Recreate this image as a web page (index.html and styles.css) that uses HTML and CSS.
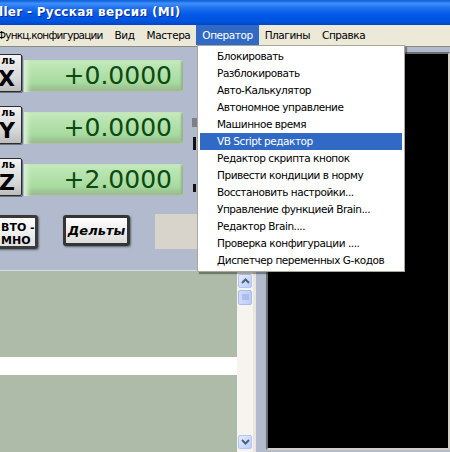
FILE: index.html
```html
<!DOCTYPE html>
<html lang="ru">
<head>
    <meta charset="UTF-8">
    <meta name="viewport" content="width=device-width, initial-scale=1.0">
    <title>Mach3 - Русская версия</title>
    <link rel="stylesheet" href="styles.css">
</head>
<body>
    <div class="window">
        <div class="titlebar">
            <span class="title">ller - Русская версия (MI)</span>
        </div>

        <div class="menubar">
            <span class="menu-item first">Функц.конфигурации</span>
            <span class="menu-item">Вид</span>
            <span class="menu-item">Мастера</span>
            <span class="menu-item active">Оператор</span>
            <span class="menu-item">Плагины</span>
            <span class="menu-item">Справка</span>
        </div>

        <div class="workspace">
            <div class="left-col">
                <div class="dro-block">
                    <div class="dro-rows">
                        <div class="dro-row">
                            <div class="zero-btn"><span class="zero-label">ль</span><span class="zero-axis">X</span></div>
                            <div class="dro">+0.0000</div>
                        </div>
                        <div class="dro-row">
                            <div class="zero-btn"><span class="zero-label">ль</span><span class="zero-axis">Y</span></div>
                            <div class="dro">+0.0000</div>
                        </div>
                        <div class="dro-row">
                            <div class="zero-btn"><span class="zero-label">ль</span><span class="zero-axis">Z</span></div>
                            <div class="dro">+2.0000</div>
                        </div>
                    </div>
                    <!-- slider peeking out from under the menu -->
                    <div class="jog-strip">
                        <div class="jog-box"></div>
                        <div class="jog-bar"></div>
                        <div class="jog-mark"></div>
                    </div>
                </div>

                <div class="btn-row">
                    <div class="auto-btn">ВТО -<br>МНО</div>
                    <div class="delta-btn">Дельты</div>
                    <div class="blank-box"></div>
                </div>

                <div class="list-area">
                    <div class="list">
                        <div class="list-row"></div>
                    </div>
                    <div class="scrollbar">
                        <div class="sb-btn">
                            <svg width="9" height="6" viewBox="0 0 9 6"><path d="M1 5 L4.5 1.5 L8 5" fill="none" stroke="#4d6185" stroke-width="2"/></svg>
                        </div>
                        <div class="sb-thumb">
                            <svg width="7" height="7" viewBox="0 0 7 7"><path d="M0 1H7M0 3H7M0 5H7" stroke="#8ea6e0" stroke-width="1"/></svg>
                        </div>
                        <div class="sb-btn sb-down">
                            <svg width="9" height="6" viewBox="0 0 9 6"><path d="M1 1 L4.5 4.5 L8 1" fill="none" stroke="#4d6185" stroke-width="2"/></svg>
                        </div>
                    </div>
                    <div class="list-edge"></div>
                </div>
            </div>

            <div class="toolpath"></div>
        </div>

        <ul class="dropdown">
            <li>Блокировать</li>
            <li>Разблокировать</li>
            <li>Авто-Калькулятор</li>
            <li>Автономное управление</li>
            <li>Машинное время</li>
            <li class="selected">VB Script редактор</li>
            <li>Редактор скрипта кнопок</li>
            <li>Привести кондиции в норму</li>
            <li>Восстановить настройки...</li>
            <li>Управление функцией Brain...</li>
            <li>Редактор Brain....</li>
            <li>Проверка конфигурации ....</li>
            <li>Диспетчер переменных G-кодов</li>
        </ul>
    </div>
</body>
</html>
```

FILE: styles.css
```css
* {
    box-sizing: border-box;
}

html, body {
    margin: 0;
    width: 450px;
    height: 452px;
    overflow: hidden;
}

body {
    background: #b1bbcd;
    font-family: 'DejaVu Sans', 'Liberation Sans', sans-serif;
}

.window {
    position: relative;
    height: 452px;
    display: flex;
    flex-direction: column;
}

.titlebar {
    height: 25px;
    flex-shrink: 0;
    background: linear-gradient(to bottom, #0a5bd8 0%, #3d8ff8 14%, #1f70ef 32%, #0058e6 60%, #0054de 85%, #0046c6 100%);
    color: #fff;
    font: bold 12px 'DejaVu Sans', sans-serif;
    line-height: 25px;
    white-space: nowrap;
}

.title {
    margin-left: -1px;
    letter-spacing: 0.3px;
    text-shadow: 1px 1px 0 #0b2a9a;
}

.menubar {
    display: flex;
    height: 22px;
    flex-shrink: 0;
    background: #ece9d8;
    border-bottom: 1px solid #8d8b80;
    font-size: 10.5px;
    letter-spacing: -0.45px;
    color: #000;
    white-space: nowrap;
}

.menu-item {
    padding: 0 6px;
    height: 20px;
    line-height: 20px;
}

.menu-item.first {
    margin-left: -9px;
    letter-spacing: -0.8px;
}

.menu-item.active {
    background: #316ac5;
    color: #fff;
}

.workspace {
    display: flex;
    flex: 1;
    min-height: 0;
}

.left-col {
    width: 262px;
    flex-shrink: 0;
    padding-top: 7px;
    display: flex;
    flex-direction: column;
}

.dro-block {
    display: flex;
}

.dro-row {
    display: flex;
    align-items: flex-start;
    height: 38px;
    margin-bottom: 14px;
}

.zero-btn {
    width: 42px;
    height: 38px;
    margin-left: -20px;
    padding-right: 6px;
    display: flex;
    flex-direction: column;
    align-items: flex-end;
    background: linear-gradient(to bottom, #f4f4f4, #d4d4d4 70%, #bcbcbc);
    border: 1px solid #2c2c2c;
    border-radius: 2px;
    box-shadow: 1px 1px 0 #6c7280;
    color: #000;
    font-weight: bold;
}

.zero-label {
    font-size: 10px;
    line-height: 12px;
}

.zero-axis {
    font-size: 22px;
    line-height: 24px;
}

.dro {
    width: 159px;
    height: 32px;
    margin: 6px 0 0 2px;
    padding-right: 11px;
    text-align: right;
    font-size: 25px;
    line-height: 32px;
    color: #0b4a10;
    background: linear-gradient(to bottom, #c3e9bb 0%, #a8db9f 70%, #9cc492 88%, #8a9783 100%);
    box-shadow: inset 4px 0 4px #d6f0d0, inset -2px 0 2px #93b48c;
}

.jog-strip {
    width: 6px;
    margin-left: 8px;
    display: flex;
    flex-direction: column;
    align-items: center;
}

.jog-box {
    width: 5px;
    height: 9px;
    margin-top: 64px;
    background: #7c7f88;
}

.jog-bar {
    width: 3px;
    height: 13px;
    margin-top: 10px;
    background: #111;
}

.jog-mark {
    width: 3px;
    height: 8px;
    margin-top: 34px;
    background: #111;
}

.btn-row {
    display: flex;
    align-items: flex-start;
    height: 55px;
    flex-shrink: 0;
    margin-top: 5px;
}

.auto-btn {
    width: 44px;
    height: 34px;
    margin-left: -6px;
    padding: 3px 0 0 4px;
    font-size: 11px;
    font-weight: bold;
    line-height: 13px;
    white-space: nowrap;
    background: linear-gradient(to bottom, #ffffff, #e0e0e0);
    border: 3px solid #3a3a3a;
    border-radius: 3px;
    box-shadow: 1px 1px 2px #5c6270;
}

.delta-btn {
    width: 67px;
    height: 31px;
    margin-left: 25px;
    font-size: 13px;
    font-weight: bold;
    font-style: italic;
    line-height: 25px;
    text-align: center;
    background: linear-gradient(to bottom, #ffffff, #dcdcdc);
    border: 3px solid #353535;
    border-radius: 3px;
    box-shadow: 1px 1px 2px #5c6270;
}

.blank-box {
    width: 60px;
    height: 35px;
    margin: -1px 0 0 25px;
    background: #d8d4cc;
}

.list-area {
    flex: 1;
    min-height: 0;
    display: flex;
    border-top: 1px solid #d6dbe4;
}

.list {
    width: 237px;
    background: #adbba8;
    padding-top: 86px;
}

.list-row {
    height: 18px;
    background: #fff;
}

.scrollbar {
    width: 16px;
    display: flex;
    flex-direction: column;
    align-items: center;
    background: #f5f4ee;
    padding: 3px 0;
}

.sb-btn {
    width: 14px;
    height: 14px;
    flex-shrink: 0;
    display: flex;
    align-items: center;
    justify-content: center;
    background: linear-gradient(to bottom right, #e3ebfe, #bccdf8);
    border: 1px solid #b4c6ef;
    border-radius: 2px;
}

.sb-down {
    margin-top: auto;
}

.sb-thumb {
    width: 14px;
    height: 15px;
    flex-shrink: 0;
    margin-top: 2px;
    display: flex;
    align-items: center;
    justify-content: center;
    background: linear-gradient(to right, #d0dcfc, #bccdf8);
    border: 1px solid #a8bcec;
    border-radius: 2px;
}

.list-edge {
    width: 3px;
    background: #e8e6de;
}

.toolpath {
    flex: 1;
    margin: 5px 0 2px 4px;
    background: #000;
    border-top: 2px solid #6e6e6e;
    border-left: 2px solid #6e6e6e;
    border-bottom: 2px solid #d4d0c8;
    border-right: 2px solid #d4d0c8;
}

.dropdown {
    position: absolute;
    top: 45px;
    left: 197px;
    width: 208px;
    margin: 0;
    padding: 2px;
    list-style: none;
    background: #fff;
    border: 1px solid #aca899;
    box-shadow: 2px 2px 1px rgba(0, 0, 0, 0.35);
    font-size: 10.5px;
    letter-spacing: -0.45px;
    color: #000;
}

.dropdown li {
    height: 17px;
    line-height: 17px;
    padding-left: 17px;
    white-space: nowrap;
}

.dropdown li.selected {
    background: #316ac5;
    color: #fff;
}
```
